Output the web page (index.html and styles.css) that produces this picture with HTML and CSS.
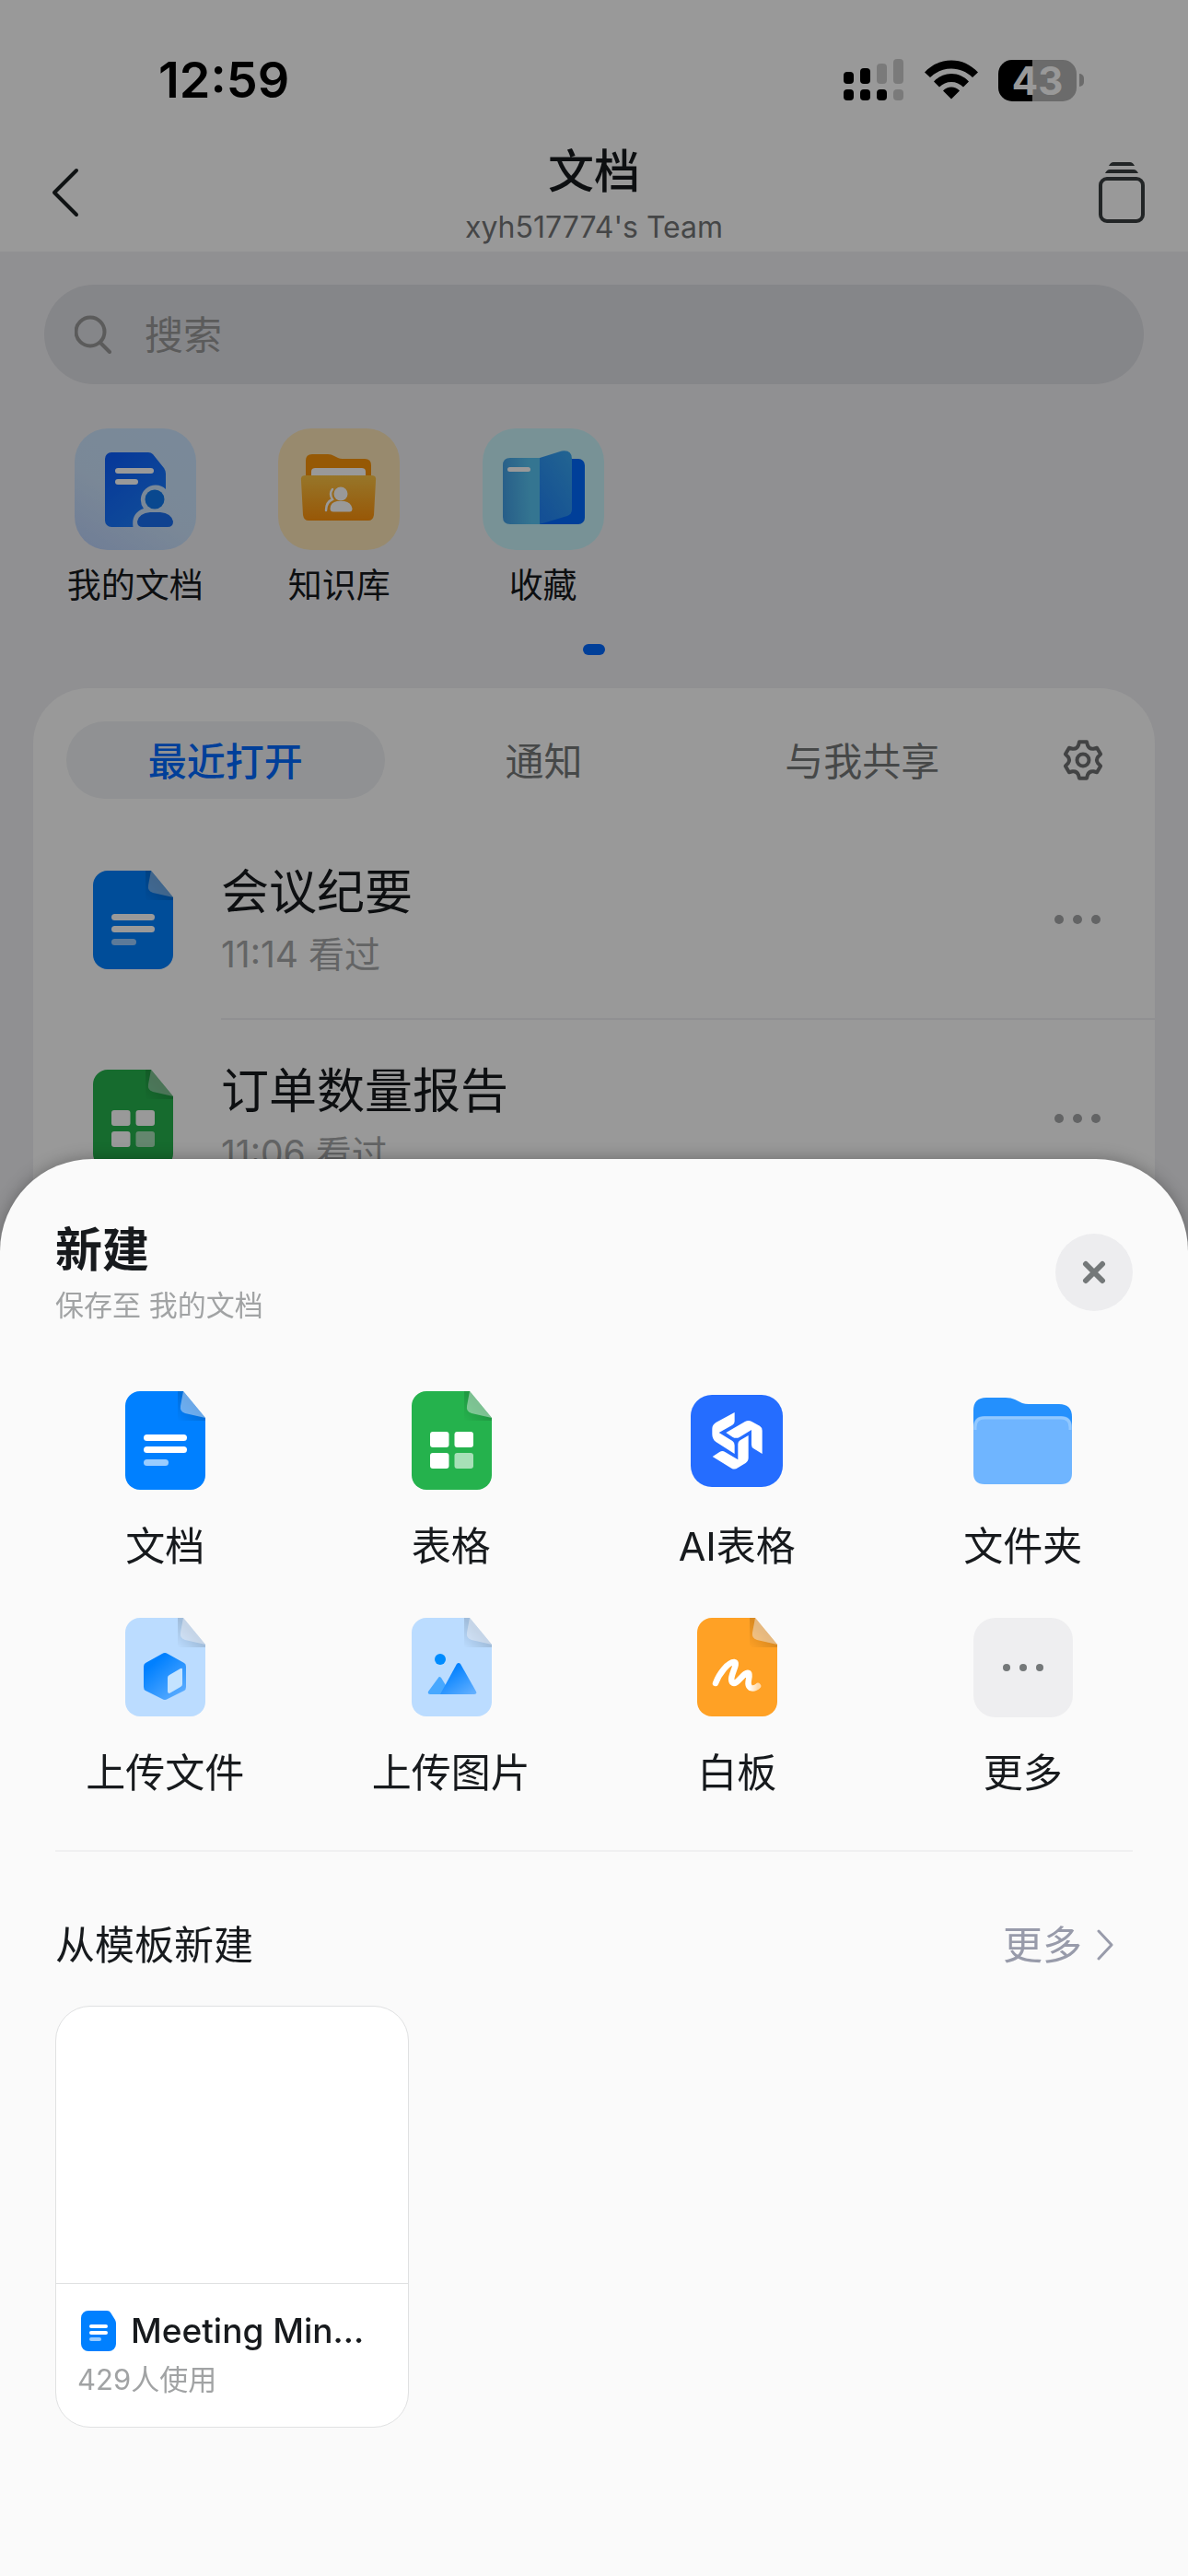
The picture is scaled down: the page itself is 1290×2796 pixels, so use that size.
FILE: index.html
```html
<!DOCTYPE html>
<html lang="zh-CN">
<head>
<meta charset="utf-8">
<meta name="viewport" content="width=device-width, initial-scale=1">
<title>文档</title>
<link rel="stylesheet" href="styles.css">
</head>
<body>
<svg class="defs" aria-hidden="true">
  <defs>
    <linearGradient id="fold-shade" x1="0" y1="1" x2="1" y2="0"><stop offset="0" stop-color="#000" stop-opacity="0"/><stop offset="0.5" stop-color="#000" stop-opacity="0.14"/></linearGradient>
    <linearGradient id="blue-fade" x1="0.2" y1="0.1" x2="0.9" y2="1"><stop offset="0.1" stop-color="#0080ff"/><stop offset="1" stop-color="#63b0ff"/></linearGradient>
    <linearGradient id="tile-blue" x1="0" y1="1" x2="0.6" y2="0"><stop offset="0" stop-color="#b9d0fb"/><stop offset="0.5" stop-color="#cce3fc"/><stop offset="1" stop-color="#cbe5ff"/></linearGradient>
    <linearGradient id="doc-blue" x1="0" y1="0" x2="0.7" y2="1"><stop offset="0" stop-color="#0a5cff"/><stop offset="1" stop-color="#1c80ff"/></linearGradient>
    <linearGradient id="folder-orange" x1="0" y1="0" x2="0" y2="1"><stop offset="0" stop-color="#fcc546"/><stop offset="1" stop-color="#fd920b"/></linearGradient>
    <linearGradient id="page-cyan" x1="0" y1="1" x2="1" y2="0.9"><stop offset="0" stop-color="#419ce4"/><stop offset="0.8" stop-color="#58c4f2"/></linearGradient>
    <linearGradient id="page-blue" x1="1" y1="0" x2="0.3" y2="1"><stop offset="0" stop-color="#3aa8f2"/><stop offset="1" stop-color="#2286f8"/></linearGradient>
    <linearGradient id="ink-fade" x1="0" y1="0" x2="1" y2="0"><stop offset="0.8" stop-color="#fff"/><stop offset="1" stop-color="#fff" stop-opacity="0.6"/></linearGradient>
    <symbol id="sheet-shape" viewBox="0 0 108 108">
      <path d="M27 0H74L98 29V91a16 16 0 0 1-16 16H27a16 16 0 0 1-16-16V16A16 16 0 0 1 27 0Z" fill="currentColor"/>
      <path d="M68 0H74L98 29V32H68Z" fill="url(#fold-shade)"/>
      <path d="M74 0L71 16q-1 6 5 8L98 29Z" fill="#f4f4f8" fill-opacity="0.44"/>
    </symbol>
    <symbol id="icon-doc" viewBox="0 0 108 108">
      <use href="#sheet-shape"/>
      <g fill="#fff"><rect x="31" y="47" width="47" height="7" rx="3.5"/><rect x="31" y="60" width="47" height="7" rx="3.5"/><rect x="31" y="74" width="27" height="7" rx="3.5" opacity="0.6"/></g>
    </symbol>
    <symbol id="icon-table" viewBox="0 0 108 108">
      <use href="#sheet-shape"/>
      <g fill="#fff"><rect x="31" y="44" width="20.500" height="17" rx="3"/><rect x="57.500" y="44" width="20.500" height="17" rx="3"/><rect x="31" y="67" width="20.500" height="17" rx="3"/><rect x="57.500" y="67" width="20.500" height="17" rx="3" opacity="0.6"/></g>
    </symbol>
    <symbol id="icon-dots" viewBox="0 0 50 12">
      <circle cx="5" cy="6" r="5"/><circle cx="25" cy="6" r="5"/><circle cx="45" cy="6" r="5"/>
    </symbol>
  </defs>
</svg>

<div class="app">
  <header class="topbar">
    <div class="status">
      <span class="clock">12:59</span>
      <div class="indicators">
        <svg width="66" height="46" viewBox="0 0 66 46" aria-hidden="true">
          <g><rect x="0" y="14" width="11" height="13" rx="4"/><rect x="18" y="10" width="11" height="17" rx="4"/><rect x="0" y="33" width="11" height="12" rx="4"/><rect x="18" y="33" width="11" height="12" rx="4"/><rect x="36" y="33" width="11" height="12" rx="4"/></g>
          <g fill-opacity="0.2"><rect x="36" y="5" width="11" height="22" rx="4"/><rect x="54" y="0" width="11" height="27" rx="4"/><rect x="54" y="33" width="11" height="12" rx="4"/></g>
        </svg>
        <svg width="58" height="46" viewBox="0 0 58 46" aria-hidden="true">
          <path d="M0 14.500C8 6 18 1.500 29 1.500S50 6 58 14.500L52 20C45.500 14 38 10.500 29 10.500S12.500 14 6 20Z"/>
          <path d="M10 24.500C15 19 21.500 16 29 16S43 19 48 24.500L42 30.500C38.500 27 34 25 29 25S19.500 27 16 30.500Z"/>
          <path d="M20 34.500C25 29 33 29 38 34.500L29 43.500Z"/>
        </svg>
        <div class="battery"><span class="battery-level">43</span></div>
      </div>
    </div>
    <nav class="nav">
      <button class="icon-button icon-button-start" aria-label="返回">
        <svg width="32" height="54" viewBox="0 0 32 54" fill="none" stroke="#1c2022" stroke-width="4" stroke-linecap="round" stroke-linejoin="round"><path d="M28 3L4 27L28 51"/></svg>
      </button>
      <div class="nav-title">
        <h1>文档</h1>
        <p>xyh517774's Team</p>
      </div>
      <button class="icon-button icon-button-end" aria-label="标签页">
        <svg width="50" height="66" viewBox="0 0 50 66" fill="none" stroke="#3a3e40" stroke-width="4"><rect x="2" y="18" width="46" height="46" rx="7"/><path d="M7 12q2-4 5-4H38q3 0 5 4ZM11 4q2-4 5-4H34q3 0 5 4Z" fill="#3a3e40" stroke="none"/></svg>
      </button>
    </nav>
  </header>

  <main class="home">
    <label class="search">
      <svg width="40" height="42" viewBox="0 0 40 42" fill="none" stroke="#989898" stroke-width="4" stroke-linecap="round"><circle cx="17" cy="18" r="15.500"/><path d="M28 30L38 40"/></svg>
      <input type="search" placeholder="搜索" aria-label="搜索">
    </label>

    <div class="shortcuts">
      <a class="shortcut" href="#mine">
        <svg width="132" height="132" viewBox="0 0 132 132" aria-hidden="true">
          <rect width="132" height="132" rx="36" fill="url(#tile-blue)"/>
          <path d="M40 26H80q3 0 5 2L97 43q2 3 2 6V66A16 16 0 0 0 75 87C66 90 62 97 63.500 107H40a7 7 0 0 1-7-7V33a7 7 0 0 1 7-7Z" fill="url(#doc-blue)"/>
          <rect x="44" y="43" width="42" height="6" rx="3" fill="#fff"/><rect x="44" y="55" width="25" height="6" rx="3" fill="#fff"/>
          <circle cx="87" cy="77" r="10.500" fill="#0f79ee"/>
          <path d="M82 91H93Q105 92 107 101q0 6-6 6H74q-6 0-6-6Q70 92 82 91Z" fill="#1a6ff0"/>
        </svg>
        <span>我的文档</span>
      </a>
      <a class="shortcut" href="#wiki">
        <svg width="132" height="132" viewBox="0 0 132 132" aria-hidden="true">
          <rect width="132" height="132" rx="36" fill="#fde6b7"/>
          <path d="M30 35q0-7 7-7H54q4 0 7 2l4 2q2 1 5 1H94q7 0 7 7V60H30Z" fill="#fb9409"/>
          <rect x="36" y="43" width="59" height="16" rx="4" fill="#fff"/>
          <path d="M29 51H102q5 0 4 6L104 94q-1 6-6 6H33q-5 0-6-6L25 57q-1-6 4-6Z" fill="url(#folder-orange)"/>
          <circle cx="68" cy="71" r="7.500" fill="#fff"/><path d="M64 79H72q7 1 8.500 8 0 3.500-3 3.500H60q-3.500 0-3.500-3.500Q57 80 64 79Z" fill="#fff"/>
          <path d="M59 66Q55 71 59 77Q52 80 52 89" fill="none" stroke="#fff" stroke-width="2.500" stroke-linecap="round"/>
        </svg>
        <span>知识库</span>
      </a>
      <a class="shortcut" href="#favorites">
        <svg width="132" height="132" viewBox="0 0 132 132" aria-hidden="true">
          <rect width="132" height="132" rx="36" fill="#c8f4fb"/>
          <rect x="56" y="33" width="55" height="71" rx="7" fill="#006aff"/>
          <path d="M62 32H30q-8 0-8 8V96q0 8 8 8H62Z" fill="url(#page-cyan)"/>
          <path d="M62 32L86 24.500Q97 23 97 33V88q0 5-5 7L62 104Z" fill="url(#page-blue)"/>
          <rect x="27" y="42" width="25" height="5" rx="2.500" fill="#fff"/>
        </svg>
        <span>收藏</span>
      </a>
    </div>
    <div class="pager"><span></span></div>

    <section class="recent">
      <div class="tabs">
        <div class="tab-list" role="tablist">
          <button class="tab tab-active" role="tab" aria-selected="true">最近打开</button>
          <button class="tab" role="tab" aria-selected="false">通知</button>
          <button class="tab" role="tab" aria-selected="false">与我共享</button>
        </div>
        <button class="settings" aria-label="设置">
          <svg width="48" height="48" viewBox="-24 -24 48 48" fill="none" stroke="#6f7172" stroke-width="4" stroke-linejoin="round"><path d="M-4-19.700L4-19.700L5-16Q6.750-11.700 11.400-12.300L15.100-13.300L19.100-6.400L16.400-3.700Q13.500 0 16.400 3.700L19.100 6.400L15.100 13.300L11.400 12.300Q6.750 11.700 5 16L4 19.700L-4 19.700L-5 16Q-6.750 11.700-11.400 12.300L-15.100 13.300L-19.100 6.400L-16.400 3.700Q-13.500 0-16.400-3.700L-19.100-6.400L-15.100-13.300L-11.400-12.300Q-6.750-11.700-5-16Z"/><circle r="6.500"/></svg>
        </button>
      </div>
      <ul class="files">
        <li class="file">
          <svg class="blue" width="108" height="108" aria-hidden="true"><use href="#icon-doc"/></svg>
          <div class="file-body">
            <div class="file-text"><h2>会议纪要</h2><p>11:14 看过</p></div>
            <button class="more" aria-label="更多操作"><svg width="50" height="12"><use href="#icon-dots"/></svg></button>
          </div>
        </li>
        <li class="file">
          <svg class="green" width="108" height="108" aria-hidden="true"><use href="#icon-table"/></svg>
          <div class="file-body">
            <div class="file-text"><h2>订单数量报告</h2><p>11:06 看过</p></div>
            <button class="more" aria-label="更多操作"><svg width="50" height="12"><use href="#icon-dots"/></svg></button>
          </div>
        </li>
      </ul>
    </section>
  </main>
</div>

<div class="scrim"></div>

<section class="sheet" role="dialog" aria-labelledby="sheet-title">
  <header class="sheet-header">
    <div>
      <h2 id="sheet-title">新建</h2>
      <p>保存至 我的文档</p>
    </div>
    <button class="close" aria-label="关闭">
      <svg width="26" height="26" viewBox="0 0 26 26" stroke="#747879" stroke-width="6" stroke-linecap="round"><path d="M4 4L22 22M22 4L4 22"/></svg>
    </button>
  </header>

  <div class="create-grid">
    <button class="create"><svg class="blue" width="108" height="108"><use href="#icon-doc"/></svg>文档</button>
    <button class="create"><svg class="green" width="108" height="108"><use href="#icon-table"/></svg>表格</button>
    <button class="create">
      <svg width="108" height="108" viewBox="-4 -4 108 108"><rect width="100" height="100" rx="23" fill="#256dff"/>
        <g fill="#fff" transform="scale(0.3333) translate(-18 -30)">
          <path d="M161 87L100 120Q88 128 88 140V158Q88 174 100 183L161 222V194Q161 185 154 180L110 153L154 128Q161 124 161 116Z"/>
          <path d="M133 153L195 117Q206 111 217 117L243 131Q251 136 251 146V222L223 205Q216 201 216 192V144L178 167Q166 174 154 167Z"/>
          <path d="M206 162V235Q206 246 197 252L171 268Q161 275 151 269L89 231L112 216Q121 210 130 216L172 241V190Q172 182 179 178Z"/>
        </g></svg>AI表格
    </button>
    <button class="create">
      <svg width="108" height="108" viewBox="0 0 108 108"><path d="M0 21Q0 7 14 7H35q6 0 10 2l8 4q3 1 7 1H93q14 0 14 14V50H0Z" fill="#2490fd"/><path d="M12 27H95q12 0 12 12V89q0 12-12 12H12Q0 101 0 89V39Q0 27 12 27Z" fill="#6fb5ff"/><path d="M2 42V39Q2 29 12 29H95q10 0 10 10v3" fill="none" stroke="#91c8ff" stroke-width="3"/></svg>文件夹
    </button>
    <button class="create">
      <svg class="pale" width="108" height="108" viewBox="0 0 108 108"><use href="#sheet-shape"/><path d="M51 39q3-2 6 0L75 49q2 1 2 4V75q0 3-2 4L57 88q-3 2-6 0L33 79q-2-1-2-4V53q0-3 2-4Z" fill="url(#blue-fade)"/><path d="M59 62L71 55q2-1 2 1V72q0 2-2 3L59 82q-2 0-2-2V65q0-2 2-3Z" fill="#c4e3ff"/></svg>上传文件
    </button>
    <button class="create">
      <svg class="pale" width="108" height="108" viewBox="0 0 108 108"><use href="#sheet-shape"/><circle cx="42" cy="45" r="6" fill="#008cff"/><path d="M31 83q-3 0-2-3L40 65q1-2 3 0L54 83Z" fill="#47a8ff"/><path d="M42 83L60 50q2-2 4 0L81 80q1 3-2 3Z" fill="url(#blue-fade)"/></svg>上传图片
    </button>
    <button class="create">
      <svg class="amber" width="108" height="108" viewBox="0 0 108 108"><use href="#sheet-shape"/><path d="M31 71C35 60 45 48 51 48C57 49 45 64 49 70C54 75 62 57 67 60C70 63 63 72 69 76C72 77 75 76 77 74" fill="none" stroke="url(#ink-fade)" stroke-width="6.500" stroke-linecap="round" stroke-linejoin="round"/></svg>白板
    </button>
    <button class="create">
      <svg width="108" height="108" viewBox="0 0 108 108"><rect width="108" height="108" rx="24" fill="#eeeef0"/><g fill="#747879"><circle cx="36" cy="54" r="4"/><circle cx="54" cy="54" r="4"/><circle cx="72" cy="54" r="4"/></g></svg>更多
    </button>
  </div>

  <div class="templates">
    <div class="templates-head">
      <h3>从模板新建</h3>
      <a href="#templates">更多<svg width="18" height="34" viewBox="0 0 18 34" fill="none" stroke="#989baa" stroke-width="3" stroke-linecap="round" stroke-linejoin="round"><path d="M2 2L16 17L2 32"/></svg></a>
    </div>
    <a class="template" href="#meeting-minutes">
      <div class="template-preview"></div>
      <div class="template-meta">
        <div class="template-name">
          <svg width="38" height="44" viewBox="0 0 38 44" aria-hidden="true"><path d="M8 0H28q3 0 4 2l5 8q1 2 1 4V36a8 8 0 0 1-8 8H8a8 8 0 0 1-8-8V8A8 8 0 0 1 8 0Z" fill="#0080ff"/><g fill="#fff"><rect x="9" y="15" width="20" height="4" rx="2"/><rect x="9" y="22" width="20" height="4" rx="2"/><rect x="9" y="29" width="13" height="4" rx="2" opacity="0.6"/></g></svg>
          <span>Meeting Min...</span>
        </div>
        <p>429人使用</p>
      </div>
    </a>
  </div>
</section>
</body>
</html>
```
FILE: styles.css
```css
* {
  box-sizing: border-box;
  margin: 0;
  padding: 0;
}

body {
  font-family: Inter, "Noto Sans CJK SC", sans-serif;
  color: #171a1d;
  background: #f1f1f4;
}

button,
input {
  font: inherit;
  color: inherit;
  border: 0;
  background: none;
  outline: 0;
}

a {
  color: inherit;
  text-decoration: none;
}

ul {
  list-style: none;
}

svg {
  display: block;
  flex: none;
}

.defs {
  position: absolute;
  width: 0;
  height: 0;
}

.blue { color: #0080ff; }
.green { color: #25b24d; }
.pale { color: #bbdcff; }
.amber { color: #ffa125; }

/* App behind the sheet */
.app {
  display: flex;
  flex-direction: column;
  height: 100vh;
  overflow: hidden;
}

.topbar {
  background: #fff;
}

.status {
  display: flex;
  justify-content: space-between;
  align-items: center;
  height: 144px;
  padding: 30px 113px 0 172px;
  color: #000;
}

.clock {
  font-size: 54px;
  font-weight: 600;
  line-height: 60px;
}

.indicators {
  display: flex;
  align-items: center;
  gap: 22px;
}

.battery {
  display: flex;
  align-items: center;
}

.battery-level {
  width: 85px;
  border-radius: 15px;
  background: linear-gradient(90deg, #000 44%, #b2b2b2 44%);
  color: #fff;
  font-size: 42px;
  font-weight: 700;
  line-height: 45px;
  text-align: center;
}

.battery::after {
  content: "";
  width: 5px;
  height: 14px;
  margin-left: 3px;
  border-radius: 0 6px 6px 0;
  background: #b2b2b2;
}

.nav {
  display: grid;
  grid-template-columns: 1fr auto 1fr;
  align-items: center;
  padding: 0 47px;
}

.icon-button-start {
  justify-self: start;
  padding-left: 8px;
}

.icon-button-end {
  justify-self: end;
}

.nav-title {
  padding: 6px 0 2px;
  text-align: center;
}

.nav-title h1 {
  font-size: 50px;
  font-weight: 500;
  line-height: 72px;
}

.nav-title p {
  font-size: 32px;
  line-height: 49px;
  color: #747677;
}

.home {
  display: flex;
  flex: 1;
  flex-direction: column;
  min-height: 0;
}

.search {
  display: flex;
  align-items: center;
  gap: 36px;
  height: 108px;
  margin: 36px 48px 48px;
  padding: 0 33px;
  border-radius: 54px;
  background: #dedfe4;
}

.search input {
  flex: 1;
  font-size: 42px;
}

.search input::placeholder {
  color: #989898;
  opacity: 1;
}

.shortcuts {
  display: grid;
  grid-template-columns: repeat(11, 1fr);
  padding: 0 36px;
}

.shortcut {
  display: grid;
  grid-column: span 2;
  justify-items: center;
  gap: 13px;
  font-size: 37px;
  line-height: 52px;
}

.pager {
  display: flex;
  justify-content: center;
  padding: 37px 0 36px;
}

.pager span {
  width: 24px;
  height: 12px;
  border-radius: 6px;
  background: #0069ff;
}

.recent {
  flex: 1;
  min-height: 0;
  margin: 0 36px;
  padding-top: 36px;
  border-radius: 60px 60px 0 0;
  background: #fff;
}

.tabs {
  display: flex;
  padding: 0 35px 0 36px;
}

.tab-list {
  display: grid;
  flex: 1;
  grid-template-columns: repeat(3, 1fr);
}

.tab {
  height: 84px;
  padding-bottom: 3px;
  border-radius: 42px;
  font-size: 42px;
  color: #767879;
}

.tab-active {
  background: #f0f2f5;
  color: #0069ff;
  font-weight: 500;
}

.settings {
  display: grid;
  place-items: center;
  width: 110px;
  padding-left: 24px;
}

.files {
  padding-top: 24px;
}

.file {
  display: flex;
  align-items: center;
  gap: 42px;
  height: 216px;
  padding-left: 54px;
}

.file-body {
  display: flex;
  flex: 1;
  justify-content: space-between;
  align-items: center;
  height: 100%;
  padding-right: 59px;
  border-bottom: 2px solid #f1f1f3;
}

.file-text {
  display: grid;
  gap: 4px;
}

.file-text h2 {
  font-size: 52px;
  font-weight: 400;
  line-height: 72px;
}

.file-text p {
  font-size: 39px;
  line-height: 54px;
  color: #a6a7a8;
}

.more {
  fill: #a6a7a8;
}

.scrim {
  position: fixed;
  inset: 0;
  background: rgba(0, 0, 0, 0.4);
}

/* Create sheet */
.sheet {
  position: fixed;
  right: 0;
  bottom: 0;
  left: 0;
  padding: 63px 0 161px;
  border-radius: 100px 100px 0 0;
  background: #fafafa;
  box-shadow: 0 0 18px rgba(0, 0, 0, 0.3);
}

.sheet-header {
  display: flex;
  justify-content: space-between;
  align-items: center;
  padding: 0 60px;
}

.sheet-header h2 {
  font-size: 51px;
  font-weight: 700;
  line-height: 72px;
}

.sheet-header p {
  font-size: 31px;
  line-height: 48px;
  color: #a1a3a4;
}

.close {
  display: grid;
  place-items: center;
  width: 84px;
  height: 84px;
  border-radius: 50%;
  background: #ededef;
}

.create-grid {
  display: grid;
  grid-template-columns: repeat(4, 1fr);
  row-gap: 48px;
  padding: 69px 24px 54px;
}

.create {
  display: flex;
  flex-direction: column;
  align-items: center;
  gap: 30px;
  font-size: 43px;
  line-height: 60px;
}

.templates {
  margin: 0 60px;
  padding-top: 71px;
  border-top: 2px solid #f0f0f1;
}

.templates-head {
  display: flex;
  justify-content: space-between;
  align-items: center;
  margin-bottom: 36px;
  padding-right: 21px;
  font-size: 43px;
  line-height: 60px;
}

.templates-head h3 {
  font-size: 43px;
  font-weight: 400;
}

.templates-head a {
  display: flex;
  align-items: center;
  gap: 16px;
  color: #989baa;
}

.template {
  display: block;
  width: 384px;
  border: 1px solid #e0e1e2;
  border-radius: 38px;
  background: #fff;
}

.template-preview {
  height: 301px;
  border-bottom: 1px solid #e0e1e2;
}

.template-meta {
  display: grid;
  gap: 5px;
  padding: 27px 23px 27px;
}

.template-name {
  display: flex;
  align-items: center;
  gap: 16px;
  padding-left: 4px;
  font-size: 37px;
  font-weight: 500;
  line-height: 48px;
  white-space: nowrap;
}

.template-meta p {
  font-size: 31px;
  line-height: 48px;
  color: #a1a3a4;
}
```
